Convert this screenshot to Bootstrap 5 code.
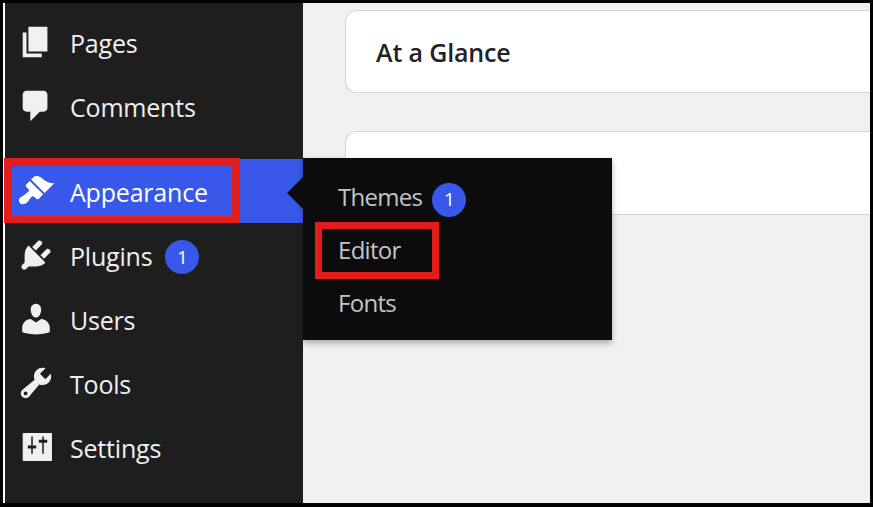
<!doctype html>
<html lang="en">
<head>
<meta charset="utf-8">
<title>Appearance menu</title>
<link href="https://cdn.jsdelivr.net/npm/bootstrap@5.3.0/dist/css/bootstrap.min.css" rel="stylesheet">
<style>
html,body{height:100%;margin:0;overflow:hidden;background:#000}
.shot-frame{position:relative;height:507px;width:873px;border:solid #000;border-width:3px 3px 4px 3px;font-family:"Open Sans","Noto Sans",sans-serif;overflow:hidden;background:#000}
.shot-inner{height:100%;border-left:2px solid #fff}
.wp-side{width:298px;background:#1e1e1e;padding-top:7px;flex:none}
.wp-item{height:64px;padding:4px 0 0 12px;color:#f0f0f1;font-size:25px;letter-spacing:-.2px;gap:15px;flex:none}
.wp-item svg{width:38px;height:38px;margin-top:-4px;fill:#f0f0f1;flex:none}
.wp-item.is-active{background:#3858e9;color:#fff;margin-top:21px}
.wp-item.is-active svg{fill:#fff}
.wp-count{width:34px;height:34px;background:#3858e9;color:#fff;font-size:19px;letter-spacing:0;border-radius:50%;margin-left:-2px}
.wp-main{background:#f0f0f0;padding:7px 0 0 42px;overflow:hidden;min-width:0}
.wp-card{height:84px;background:#fff;border:1px solid #d5d5d5;border-right:0;border-radius:12px 0 0 12px;margin-bottom:37px;padding-left:30px}
.wp-card:first-child{height:83px;margin-bottom:38px}
.wp-card h2{font-size:25px;font-weight:600;color:#1d2327;letter-spacing:-.15px;margin:0}
.wp-fly{position:absolute;left:300px;top:155px;width:309px;height:182px;background:#0c0c0c;box-shadow:0 3px 6px rgba(0,0,0,.3);padding:12px 0 0 35px}
.wp-fly::before{content:"";position:absolute;left:-16px;top:19px;border:solid transparent;border-width:16px 16px 16px 0;border-right-color:#0c0c0c}
.wp-fly-item{height:53px;color:#c3c4c7;font-size:24px;letter-spacing:-.7px;gap:10px}
.wp-fly-item .wp-count{margin-left:0;margin-top:6px}
.mark-box{position:absolute;border:solid #e31c1c;border-width:8px}
.mark-a{left:1px;top:155px;width:236px;height:65px;border-bottom-width:7px}
.mark-b{left:312px;top:219px;width:124px;height:57px;border-width:7px}
</style>
</head>
<body>
<div class="shot-frame">
  <div class="shot-inner d-flex">
    <nav class="wp-side d-flex flex-column">
      <div class="wp-item d-flex align-items-center"><svg viewBox="0 0 20 20"><path d="M6 15V2h10v13H6zm-1 1h8v2H3V5h2v11z"/></svg>Pages</div>
      <div class="wp-item d-flex align-items-center"><svg viewBox="0 0 20 20"><path d="M5 2h9q.82 0 1.41.59T16 4v7q0 .82-.59 1.41T14 13h-2l-5 5v-5H5q-.82 0-1.41-.59T3 11V4q0-.82.59-1.41T5 2z"/></svg>Comments</div>
      <div class="wp-item is-active d-flex align-items-center"><svg viewBox="0 0 20 20"><path d="M14.48 11.06L7.41 3.99l1.5-1.5c.5-.56 2.3-.47 3.51.32 1.21.8 1.43 1.28 2.91 2.1 1.18.64 2.45 1.26 4.45.85zm-.71.71L6.7 4.7 4.93 6.47c-.39.39-.39 1.02 0 1.41l1.06 1.06c.39.39.39 1.03 0 1.42-.6.6-1.43 1.11-2.21 1.69-.35.26-.7.53-1.01.84C1.43 13.25 1 14.21 1 15c0 1.1.9 2 2 2 .79 0 1.75-.43 2.11-.79.31-.31.58-.66.84-1.01.58-.78 1.09-1.61 1.69-2.21.39-.39 1.03-.39 1.42 0l1.06 1.06c.39.39 1.02.39 1.41 0z"/></svg>Appearance</div>
      <div class="wp-item d-flex align-items-center"><svg viewBox="0 0 20 20"><path d="M13.11 4.36L9.87 7.6 8 5.73l3.24-3.24c.35-.34 1.05-.2 1.56.32.52.51.66 1.21.31 1.55zm-8 1.77l.91-1.12 9.01 9.01-1.19.84c-.71.71-2.63 1.16-3.82 1.16H6.14L4.9 17.26c-.59.59-1.54.59-2.12 0-.59-.58-.59-1.53 0-2.12l1.24-1.24v-3.88c0-1.13.4-3.19 1.09-3.89zm7.26 3.97l3.24-3.24c.34-.35 1.04-.21 1.55.31.52.51.66 1.21.31 1.55l-3.24 3.25z"/></svg>Plugins<span class="wp-count d-inline-flex align-items-center justify-content-center">1</span></div>
      <div class="wp-item d-flex align-items-center"><svg viewBox="0 0 20 20"><path d="M10 9.25c-2.27 0-2.73-3.44-2.73-3.44C7 4.02 7.82 2 9.97 2c2.16 0 2.98 2.02 2.71 3.81 0 0-.41 3.44-2.68 3.44zm0 2.57L12.72 10c2.39 0 4.52 2.33 4.52 4.53v2.49s-3.65 1.13-7.24 1.13c-3.65 0-7.24-1.13-7.24-1.13v-2.49c0-2.25 1.94-4.48 4.47-4.48z"/></svg>Users</div>
      <div class="wp-item d-flex align-items-center"><svg viewBox="0 0 20 20"><path d="M16.68 9.77c-1.34 1.34-3.3 1.67-4.95.99l-5.41 6.52c-.99.99-2.59.99-3.58 0s-.99-2.59 0-3.57l6.52-5.42c-.68-1.65-.35-3.61.99-4.95 1.28-1.28 3.12-1.62 4.72-1.06l-2.89 2.89 2.82 2.82 2.86-2.87c.53 1.58.18 3.39-1.08 4.65zM3.81 16.21c.4.39 1.04.39 1.43 0 .4-.4.4-1.04 0-1.43-.39-.4-1.03-.4-1.43 0-.39.39-.39 1.03 0 1.43z"/></svg>Tools</div>
      <div class="wp-item d-flex align-items-center"><svg viewBox="0 0 20 20"><path fill-rule="evenodd" d="M3.4 2.6h14.6q.4 0 .4.4v14q0 .4-.4.4H3.4q-.4 0-.4-.4V3q0-.4.4-.4zM7.500 4.500v4.700H5.700v1.600h1.800v2.700h.8v-2.700h1.800V9.200H8.300V4.500zM13.300 4.500v1.700h-1.800v1.600h1.800v5.700h.8V7.800h1.800V6.200h-1.800V4.500z"/></svg>Settings</div>
    </nav>
    <main class="wp-main flex-grow-1">
      <section class="wp-card d-flex align-items-center"><h2>At a Glance</h2></section>
      <section class="wp-card"></section>
    </main>
  </div>
  <div class="wp-fly">
    <div class="wp-fly-item d-flex align-items-center">Themes<span class="wp-count d-inline-flex align-items-center justify-content-center">1</span></div>
    <div class="wp-fly-item d-flex align-items-center">Editor</div>
    <div class="wp-fly-item d-flex align-items-center">Fonts</div>
  </div>
  <div class="mark-box mark-a"></div>
  <div class="mark-box mark-b"></div>
</div>
</body>
</html>
